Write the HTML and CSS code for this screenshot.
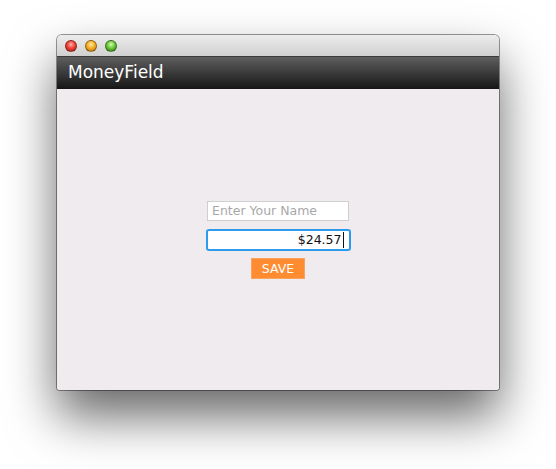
FILE: index.html
```html
<!DOCTYPE html>
<html>
<head>
<meta charset="utf-8">
<link rel="stylesheet" href="styles.css">
</head>
<body>
<div class="window">
  <div class="titlebar">
    <span class="light red"></span>
    <span class="light yellow"></span>
    <span class="light green"></span>
  </div>
  <div class="header">MoneyField</div>
  <div class="content">
    <div class="form">
      <div class="field placeholder">Enter Your Name</div>
      <div class="field focused"><span class="value">$24.57</span><span class="caret"></span></div>
      <div class="button">SAVE</div>
    </div>
  </div>
</div>
</body>
</html>
```
FILE: styles.css
```css
html, body {
  margin: 0;
  background: #ffffff;
}
html {
  min-height: 469px;
}
body {
  min-height: 469px;
  box-sizing: border-box;
  padding: 35px 0 0 57px;
  font-family: "DejaVu Sans", "Liberation Sans", sans-serif;
}
.window {
  width: 442px;
  height: 355px;
  display: flex;
  flex-direction: column;
  border-radius: 5px 5px 3px 3px;
  box-shadow: 0 26px 50px rgba(0,0,0,0.6), 0 0 0 1px rgba(0,0,0,0.4);
  overflow: hidden;
}
.titlebar {
  height: 21px;
  flex: none;
  display: flex;
  align-items: center;
  gap: 8px;
  padding-left: 8px;
  background: linear-gradient(#ececec, #d0d0d0);
  border-bottom: 1px solid #3c3c3c;
}
.light {
  width: 12px;
  height: 12px;
  border-radius: 50%;
  box-sizing: border-box;
  border: 1px solid rgba(0,0,0,0.35);
}
.red { background: radial-gradient(circle at 50% 35%, #ffb0a8 0, #f0443a 45%, #a81a10 100%); }
.yellow { background: radial-gradient(circle at 50% 35%, #ffe8a0 0, #f5b02a 45%, #b06a00 100%); }
.green { background: radial-gradient(circle at 50% 35%, #d8ffb0 0, #6cc83a 45%, #2e7a10 100%); }
.header {
  height: 32px;
  flex: none;
  box-sizing: border-box;
  padding: 5px 0 0 11px;
  color: #ffffff;
  font-size: 17px;
  background: linear-gradient(#5e5e5e, #161616);
}
.content {
  flex: 1;
  background: #efebee;
  display: flex;
  align-items: center;
  justify-content: center;
}
.form {
  display: flex;
  flex-direction: column;
  align-items: center;
}
.field {
  box-sizing: border-box;
  background: #ffffff;
  font-size: 12.5px;
  display: flex;
  align-items: center;
}
.placeholder {
  width: 142px;
  height: 20px;
  border: 1px solid #cfcfcf;
  color: #a8a8a8;
  padding-left: 4px;
}
.focused {
  width: 145px;
  height: 22px;
  margin-top: 8px;
  border: 2px solid #2f9bef;
  border-radius: 3px;
  justify-content: flex-end;
  padding-right: 5px;
  color: #111111;
}
.caret {
  width: 1px;
  height: 16px;
  background: #111111;
  margin-left: 1px;
}
.button {
  margin-top: 7px;
  width: 54px;
  height: 21px;
  box-sizing: border-box;
  background: #ff8c30;
  border: 1px solid #f7a460;
  color: #ffffff;
  font-size: 12.5px;
  display: flex;
  align-items: center;
  justify-content: center;
}
```
